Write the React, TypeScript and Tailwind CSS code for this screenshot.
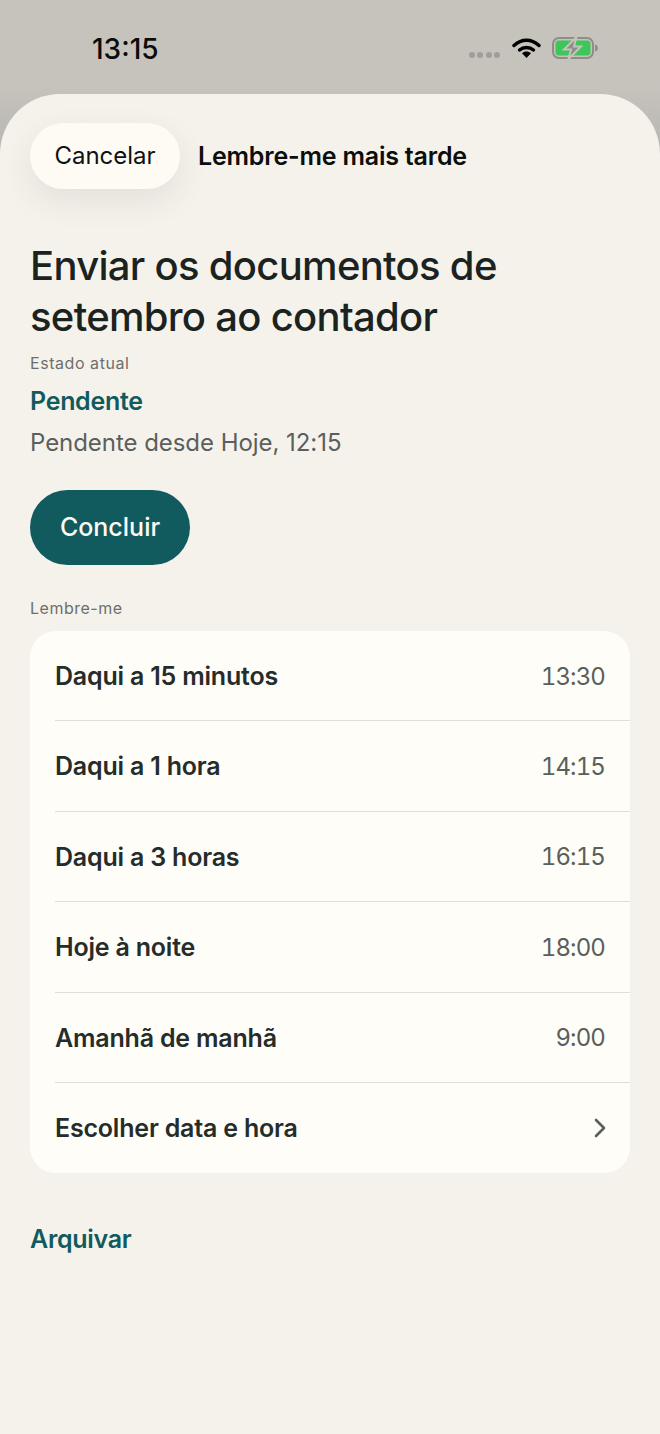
const reminders = [
  { label: "Daqui a 15 minutos", time: "13:30" },
  { label: "Daqui a 1 hora", time: "14:15" },
  { label: "Daqui a 3 horas", time: "16:15" },
  { label: "Hoje à noite", time: "18:00" },
  { label: "Amanhã de manhã", time: "9:00" },
];

const StatusBar = () => (
  <div className="h-[94px] shrink-0 flex items-start justify-between pl-[92px] pr-[62px] pt-[33px]">
    <span className="text-[28px] leading-[32px] font-medium text-[#0b0b0b]">13:15</span>
    <div className="flex items-center pt-[4px]">
      <div className="flex gap-[2.500px] mt-[13px] mr-[12px]">
        <span className="w-[6px] h-[6px] rounded-full bg-[#a09e99]" />
        <span className="w-[6px] h-[6px] rounded-full bg-[#a09e99]" />
        <span className="w-[6px] h-[6px] rounded-full bg-[#a09e99]" />
        <span className="w-[6px] h-[6px] rounded-full bg-[#a09e99]" />
      </div>
      <svg width="29" height="22" viewBox="0 0 29 22" fill="none" className="mr-[11px]">
        <path d="M2 8.500C9.500 1.500 19.500 1.500 27 8.500" stroke="#000" strokeWidth="3.400" strokeLinecap="round" />
        <path d="M7.500 13C11.500 9.600 17.500 9.600 21.500 13" stroke="#000" strokeWidth="3.400" strokeLinecap="round" />
        <path d="M10 16.200 14.500 21 19 16.200C16.500 14 12.500 14 10 16.200Z" fill="#000" />
      </svg>
      <svg width="46" height="22" viewBox="0 0 46 22" fill="none">
        <rect x="1" y="1" width="40" height="20" rx="6" stroke="#8f8d88" strokeWidth="2" />
        <rect x="3.500" y="3.500" width="35" height="15" rx="3.500" fill="#3dc65a" />
        <path d="M43 7.500c2 .5 3 2 3 3.500s-1 3-3 3.500z" fill="#8f8d88" />
        <path d="M24.500 0 12 12.500h7L16.500 22 29 9.500h-7z" fill="#8f8d88" stroke="#c6c3bc" strokeWidth="2" />
      </svg>
    </div>
  </div>
);

export default function App() {
  return (
    <div
      className="w-[660px] h-[1434px] flex flex-col overflow-hidden bg-[linear-gradient(#c6c3bc_0px,#c5c3bc_85px,#b6b4ae_160px)]"
      style={{ fontFamily: "Inter, sans-serif" }}
    >
      <StatusBar />
      <div className="flex-1 bg-[#f5f2ec] rounded-t-[60px] px-[30px] pt-[29px]">
        <div className="flex items-center gap-[18px]">
          <button className="w-[150px] h-[66px] rounded-[33px] bg-[#fefbf5] text-[24px] text-[#101211] shadow-[0_12px_32px_rgba(60,55,40,0.09)]">
            Cancelar
          </button>
          <span className="pt-[1px] text-[25px] tracking-[-0.2px] font-semibold text-[#0c0e0d]">Lembre-me mais tarde</span>
        </div>

        <h1 className="mt-[51px] text-[40px] tracking-[-0.7px] leading-[51px] font-medium text-[#1b2321]">
          Enviar os documentos de
          <br />
          setembro ao contador
        </h1>
        <p className="mt-[9px] text-[16px] tracking-[0.55px] leading-[24px] text-[#6d6f6b]">Estado atual</p>
        <p className="mt-[11px] text-[25px] leading-[30px] font-semibold tracking-[-0.3px] text-[#115a5e]">Pendente</p>
        <p className="mt-[12px] text-[24px] leading-[30px] tracking-[-0.05px] text-[#5b5f5c]">Pendente desde Hoje, 12:15</p>

        <button className="mt-[32px] block w-[160px] h-[75px] pt-[1px] rounded-[38px] bg-[#115a5e] text-[25px] font-medium text-[#fefbf5]">
          Concluir
        </button>

        <p className="mt-[31px] text-[16px] tracking-[0.5px] leading-[24px] text-[#6d6f6b]">Lembre-me</p>
        <div className="mt-[11px] rounded-[26px] bg-[#fefdf8] overflow-hidden">
          {reminders.map((r) => (
            <div key={r.label} className="pl-[25px]">
              <div className="h-[90.400px] flex items-center justify-between pr-[25px] pt-[2px] text-[25px] border-b border-[#dfdeda]">
                <span className="font-semibold tracking-[-0.2px] text-[#252c2a]">{r.label}</span>
                <span className="text-[24px] tracking-[-0.9px] tabular-nums text-[#5b5f5c]">{r.time}</span>
              </div>
            </div>
          ))}
          <div className="h-[90px] pl-[25px] pr-[23px] pt-[2px] flex items-center justify-between text-[25px]">
            <span className="font-semibold tracking-[-0.2px] text-[#252c2a]">Escolher data e hora</span>
            <svg width="14" height="20" viewBox="0 0 14 20" fill="none" className="-mt-[2px]">
              <path d="M3 2l8 8-8 8" stroke="#5b5f5c" strokeWidth="2.600" strokeLinecap="round" strokeLinejoin="round" />
            </svg>
          </div>
        </div>

        <p className="mt-[51px] text-[25px] leading-[30px] font-semibold tracking-[-0.3px] text-[#115a5e]">Arquivar</p>
      </div>
    </div>
  );
}
